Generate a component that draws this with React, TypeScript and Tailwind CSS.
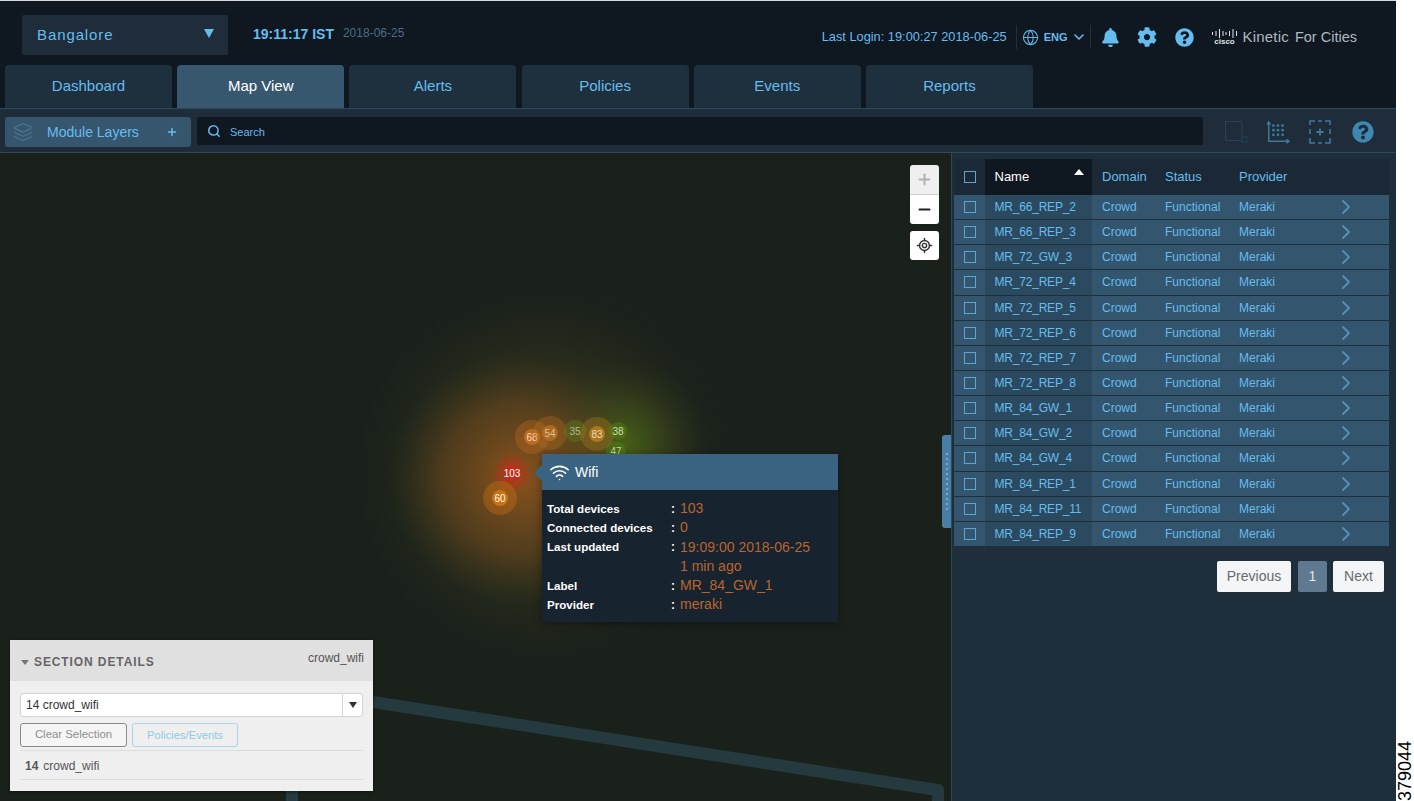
import React from 'react'
import { ChevronDown, ChevronRight, Globe, Layers, LocateFixed, Minus, Plus, Search, Wifi } from 'lucide-react'
import { FaBell, FaCog, FaQuestionCircle } from 'react-icons/fa'

const tabs = ['Dashboard', 'Map View', 'Alerts', 'Policies', 'Events', 'Reports']

const devices = [
  'MR_66_REP_2',
  'MR_66_REP_3',
  'MR_72_GW_3',
  'MR_72_REP_4',
  'MR_72_REP_5',
  'MR_72_REP_6',
  'MR_72_REP_7',
  'MR_72_REP_8',
  'MR_84_GW_1',
  'MR_84_GW_2',
  'MR_84_GW_4',
  'MR_84_REP_1',
  'MR_84_REP_11',
  'MR_84_REP_9',
]

const clusters = [
  { x: 532, y: 284, halo: 17, dot: 8, color: '#c8701f', label: '68', text: '#f2dcc4' },
  { x: 550, y: 280, halo: 17, dot: 8, color: '#b8701f', label: '54', text: '#d9c09a' },
  { x: 575, y: 278, halo: 11, dot: 0, color: '#5a7a1c', label: '35', text: '#b5ba90' },
  { x: 597, y: 281, halo: 17, dot: 8, color: '#b8801f', label: '83', text: '#efdcb8' },
  { x: 618, y: 278, halo: 9, dot: 0, color: '#4f8a12', label: '38', text: '#d3deb0' },
  { x: 616, y: 298, halo: 10, dot: 0, color: '#4f8a12', label: '47', text: '#c8d4a8' },
  { x: 512, y: 320, halo: 17, dot: 9, color: '#c9281c', label: '103', text: '#ffffff' },
  { x: 500, y: 345, halo: 17, dot: 8, color: '#d9780f', label: '60', text: '#ffffff' },
]

const popoverRows = [
  { label: 'Total devices', value: '103' },
  { label: 'Connected devices', value: '0' },
  { label: 'Last updated', value: '19:09:00 2018-06-25' },
  { label: '', value: '1 min ago' },
  { label: 'Label', value: 'MR_84_GW_1' },
  { label: 'Provider', value: 'meraki' },
]

const CiscoLogo = () => (
  <div className="flex w-[28px] flex-col items-center">
    <svg width="28" height="9" viewBox="0 0 28 9">
      {[1, 4.5, 8, 11.5, 14.5, 18, 21.5, 25].map((x, i) => {
        const h = [3, 5, 9, 5, 3, 5, 9, 5][i]
        return <rect key={x} x={x} y={(9 - h) / 2} width="1" height={h} fill="#dfe6ea" />
      })}
    </svg>
    <span className="text-[8px] leading-[8px] font-bold text-[#dfe6ea]">cisco</span>
  </div>
)

const Header = () => (
  <div className="flex h-[64px] items-start bg-[#0f1720] pl-[22px]">
    <div className="mt-[14px] flex h-[40px] w-[206px] items-center justify-between rounded-[2px] bg-[#1e2d39] pl-[15px] pr-[14px]">
      <span className="text-[15px] font-medium tracking-[0.9px] text-[#67bcee]">Bangalore</span>
      <svg width="10" height="9" viewBox="0 0 10 9" className="mb-[3px]">
        <path d="M0 0h10L5 9z" fill="#67bcee" />
      </svg>
    </div>
    <span className="ml-[25px] mt-[24px] text-[14px] leading-[18px] font-bold text-[#67bcee]">19:11:17 IST</span>
    <span className="ml-[9px] mt-[25px] text-[12px] leading-[14px] text-[#4b6d85]">2018-06-25</span>
    <div className="ml-auto mr-[39px] mt-[23px] flex h-[26px] items-center">
      <span className="text-[12.8px] font-medium text-[#67bcee]">Last Login: 19:00:27 2018-06-25</span>
      <div className="ml-[9px] h-[24px] w-px bg-[#22303b]" />
      <Globe className="ml-[5px] h-[17px] w-[17px] text-[#5fb0e0]" strokeWidth={1.6} />
      <span className="ml-[5px] text-[11px] font-bold text-[#67bcee]">ENG</span>
      <ChevronDown className="ml-[3px] h-[16px] w-[16px] text-[#67bcee]" strokeWidth={2.4} />
      <div className="ml-[3px] h-[24px] w-px bg-[#22303b]" />
      <FaBell className="ml-[11px] h-[19px] w-[17px] text-[#67bcee]" />
      <FaCog className="ml-[18px] h-[20px] w-[20px] text-[#67bcee]" />
      <FaQuestionCircle className="ml-[18px] h-[19px] w-[19px] text-[#67bcee]" />
      <div className="ml-[17px]">
        <CiscoLogo />
      </div>
      <span className="ml-[4px] mt-px text-[15px] tracking-[0.2px] text-[#aeb8bf]">Kinetic</span>
      <span className="ml-[6px] mt-px text-[14.5px] text-[#aeb8bf]">For Cities</span>
    </div>
  </div>
)

const Tabs = () => (
  <div className="flex h-[43px] items-stretch gap-[5.2px] bg-[#0f1720] pl-[5px]">
    {tabs.map((tab) =>
      tab === 'Map View' ? (
        <div
          key={tab}
          className="flex w-[167px] items-center justify-center rounded-t-[4px] bg-[#37576f] text-[15px] font-medium text-white"
        >
          {tab}
        </div>
      ) : (
        <div
          key={tab}
          className="flex w-[167px] items-center justify-center rounded-t-[4px] bg-[#1e303d] text-[15px] text-[#67bcee]"
        >
          {tab}
        </div>
      ),
    )}
  </div>
)

const Toolbar = () => (
  <div className="flex h-[45px] items-start border-y border-[#2c4a5f] bg-[#1e2d39] pl-[5px] pt-[7px]">
    <div className="mt-px flex h-[30px] w-[186px] items-center rounded-[3px] bg-[#36566e] pl-[8px]">
      <Layers className="h-[20px] w-[20px] text-[#4f7690]" strokeWidth={1.4} />
      <span className="ml-[14px] text-[14px] text-[#67bcee]">Module Layers</span>
      <Plus className="ml-[27px] h-[12px] w-[12px] text-[#67bcee]" strokeWidth={3} />
    </div>
    <div className="ml-[6px] mt-px flex h-[28px] w-[1006px] items-center rounded-[2px] bg-[#0f1720] pl-[10px]">
      <Search className="mb-[1px] h-[14px] w-[14px] text-[#67bcee]" strokeWidth={2.6} />
      <span className="ml-[9px] mt-[2px] text-[11px] text-[#67bcee]">Search</span>
    </div>
    <div className="ml-[20px] mt-[2px] flex h-[28px] items-center">
      <svg width="26" height="26" viewBox="0 0 26 26" fill="none" stroke="#27445a" strokeWidth="1">
        <path d="M19 19.5V2.5H2.5v19h16" />
        <path d="M19 18h5v6l-2.5-1.5L19 24z" />
      </svg>
      <svg width="24" height="26" viewBox="0 0 26 26" className="ml-[17px]" fill="none" stroke="#3d7a9f" strokeWidth="1.6">
        <path d="M3 3v20h21" />
        <path d="M1 5l2-3 2 3M22 21l3 2-3 2" />
        <g fill="#3d7a9f" stroke="none">
          {[8, 13, 18].map((cx) =>
            [6, 11, 16].map((cy) => <circle key={`${cx}-${cy}`} cx={cx} cy={cy} r="1.5" />),
          )}
        </g>
      </svg>
      <svg width="24" height="26" viewBox="0 0 24 26" className="ml-[18px]" fill="none" stroke="#3d7a9f" strokeWidth="1.6">
        <path d="M2 6V2h5M17 2h5v4M2 19v5h5M17 24h5v-5M10 2h4M10 24h4M2 10v5M22 10v5" />
        <path d="M12 9.5v7M8.5 13h7" strokeWidth="1.8" />
      </svg>
      <FaQuestionCircle className="ml-[20px] h-[22px] w-[22px] text-[#3f86b0]" />
    </div>
  </div>
)

const MapCanvas = () => (
  <svg width="951" height="648" viewBox="0 0 951 648" className="block">
    <defs>
      <radialGradient id="heatWide">
        <stop offset="0" stopColor="#6a4c1e" stopOpacity="0.85" />
        <stop offset="0.45" stopColor="#453f1c" stopOpacity="0.55" />
        <stop offset="0.75" stopColor="#2b2f1c" stopOpacity="0.32" />
        <stop offset="1" stopColor="#1a211b" stopOpacity="0" />
      </radialGradient>
      <radialGradient id="heatOrange">
        <stop offset="0" stopColor="#a05a1c" stopOpacity="0.7" />
        <stop offset="0.6" stopColor="#74491f" stopOpacity="0.45" />
        <stop offset="1" stopColor="#4a3a1c" stopOpacity="0" />
      </radialGradient>
      <radialGradient id="heatGreen">
        <stop offset="0" stopColor="#4f7a14" stopOpacity="0.65" />
        <stop offset="0.5" stopColor="#4a601a" stopOpacity="0.32" />
        <stop offset="1" stopColor="#2a3a1c" stopOpacity="0" />
      </radialGradient>
    </defs>
    <circle cx="545" cy="322" r="200" fill="url(#heatWide)" />
    <circle cx="625" cy="290" r="85" fill="url(#heatGreen)" />
    <circle cx="515" cy="325" r="125" fill="url(#heatOrange)" />
    <path d="M373 549L938 637V648M292 636V648" fill="none" stroke="#243a3e" strokeWidth="12" strokeLinejoin="round" />
    {clusters.map((c) => (
      <g key={c.label}>
        <circle cx={c.x} cy={c.y} r={c.halo} fill={c.color} fillOpacity={c.dot ? 0.32 : 0.45} />
        {c.dot > 0 && <circle cx={c.x} cy={c.y} r={c.dot} fill={c.color} fillOpacity="0.8" />}
        <text
          x={c.x}
          y={c.y + 3.5}
          textAnchor="middle"
          fontSize="10"
          fontFamily="'Liberation Sans', sans-serif"
          fill={c.text}
        >
          {c.label}
        </text>
      </g>
    ))}
  </svg>
)

const MapControls = () => (
  <div className="absolute left-[910px] top-[12px] flex w-[29px] flex-col">
    <div className="flex h-[30px] items-center justify-center rounded-t-[3px] border-b border-[#cfcfcf] bg-[#efefef]">
      <Plus className="h-[17px] w-[17px] text-[#b0b0b0]" strokeWidth={2.8} />
    </div>
    <div className="flex h-[29px] items-center justify-center rounded-b-[3px] bg-white">
      <Minus className="h-[17px] w-[17px] text-[#222222]" strokeWidth={3} />
    </div>
    <div className="mt-[7px] flex h-[29px] items-center justify-center rounded-[3px] bg-white">
      <LocateFixed className="h-[17px] w-[17px] text-[#333333]" strokeWidth={2} />
    </div>
  </div>
)

const WifiPopover = () => (
  <div className="absolute left-[542px] top-[301px] w-[296px] shadow-[0_2px_8px_rgba(0,0,0,0.4)]">
    <div className="absolute left-[-8px] top-[11px] h-0 w-0 border-y-[8px] border-r-[8px] border-y-transparent border-r-[#3a6382]" />
    <div className="flex h-[36px] items-center bg-[#3a6382] pl-[7px]">
      <Wifi className="h-[21px] w-[21px] text-white" strokeWidth={1.8} />
      <span className="ml-[5px] mt-px text-[14px] text-white">Wifi</span>
    </div>
    <div className="bg-[#17232e] px-[5px] pb-[8px] pt-[8px]">
      {popoverRows.map((row) => (
        <div key={row.value} className="grid h-[19.3px] grid-cols-[124px_9px_1fr] items-center">
          <span className="text-[11.6px] font-bold text-white">{row.label}</span>
          <span className="text-[12px] font-bold text-white">{row.label ? ':' : ''}</span>
          <span className="text-[14px] text-[#b9652f]">{row.value}</span>
        </div>
      ))}
    </div>
  </div>
)

const SectionDetails = () => (
  <div className="absolute left-[10px] top-[487px] w-[363px] bg-[#efefef] shadow-[0_1px_3px_rgba(0,0,0,0.5)]">
    <div className="flex h-[41px] items-start justify-between bg-[#e0e0e0] pl-[11px] pr-[9px]">
      <div className="mt-[13px] flex items-center">
        <svg width="8" height="5" viewBox="0 0 8 5">
          <path d="M0 0h8L4 5z" fill="#777777" />
        </svg>
        <span className="ml-[5px] text-[12px] font-bold tracking-[0.9px] text-[#666666]">SECTION DETAILS</span>
      </div>
      <span className="mt-[9px] text-[12px] text-[#555555]">crowd_wifi</span>
    </div>
    <div className="px-[10px] pt-[12px]">
      <div className="flex h-[24px] items-center rounded-[3px] border border-[#d4d4d4] bg-white pl-[5px]">
        <span className="flex-1 text-[12px] text-[#333333]">14 crowd_wifi</span>
        <div className="flex h-full w-[20px] items-center justify-center border-l border-[#d4d4d4]">
          <svg width="8" height="6" viewBox="0 0 8 6">
            <path d="M0 0h8L4 6z" fill="#333333" />
          </svg>
        </div>
      </div>
      <div className="mt-[6px] flex gap-[5px] border-b border-[#dcdcdc] pb-[3px]">
        <div className="flex h-[24px] w-[107px] items-center justify-center rounded-[3px] border border-[#8a8a8a] bg-[#f5f5f5] text-[11.4px] text-[#8f8f8f]">
          Clear Selection
        </div>
        <div className="flex h-[24px] w-[106px] items-center justify-center rounded-[3px] border border-[#a9d6ec] text-[11.2px] text-[#8fc9e6]">
          Policies/Events
        </div>
      </div>
      <div className="flex h-[29px] items-center border-b border-[#dcdcdc] pl-[5px] pt-[2px] text-[12px] text-[#555555]">
        <span className="font-bold">14</span>
        <span className="ml-[5px]">crowd_wifi</span>
      </div>
      <div className="h-[11px]" />
    </div>
  </div>
)

const Checkbox = () => <div className="h-[12px] w-[12px] border-[1.5px] border-[#5fa5d2]" />

const DeviceTable = () => (
  <div className="flex flex-col">
    <div className="grid h-[36px] grid-cols-[31px_107px_63px_74px_1fr] items-center bg-[#1a2935] text-[13px] text-[#67bcee]">
      <div className="flex justify-center">
        <Checkbox />
      </div>
      <div className="relative flex h-full items-center bg-[#10181f] pl-[9.5px] font-medium text-white">
        Name
        <svg width="10" height="6" viewBox="0 0 10 6" className="absolute right-[8px] top-[10px]">
          <path d="M0 6h10L5 0z" fill="#ffffff" />
        </svg>
      </div>
      <div className="pl-[10px]">Domain</div>
      <div className="pl-[10px]">Status</div>
      <div className="pl-[10px]">Provider</div>
    </div>
    {devices.map((name) => (
      <div
        key={name}
        className="mb-[1px] grid h-[24.15px] grid-cols-[31px_107px_63px_74px_106px_1fr] items-center bg-[#33556d] text-[12px] text-[#67bcee]"
      >
        <div className="flex justify-center">
          <Checkbox />
        </div>
        <div className="flex h-full items-center bg-[#2b4a60] pl-[9.5px] tracking-[-0.2px]">{name}</div>
        <div className="pl-[10px]">Crowd</div>
        <div className="pl-[10px]">Functional</div>
        <div className="pl-[10px]">Meraki</div>
        <ChevronRight className="ml-[-1px] h-[24px] w-[24px] text-[#5590b8]" strokeWidth={1.8} />
      </div>
    ))}
  </div>
)

const Pagination = () => (
  <div className="mt-[14px] flex justify-end pr-[5px] text-[14px]">
    <div className="flex h-[31px] w-[74px] items-center justify-center rounded-[2px] bg-[#f3f5f6] text-[#666b6f]">Previous</div>
    <div className="ml-[7px] flex h-[31px] w-[29px] items-center justify-center rounded-[2px] bg-[#5f7a90] text-[#dfe6ea]">1</div>
    <div className="ml-[6px] flex h-[31px] w-[51px] items-center justify-center rounded-[2px] bg-[#f3f5f6] text-[#666b6f]">Next</div>
  </div>
)

export default function App() {
  return (
    <div className="flex h-[801px] w-[1414px] overflow-hidden bg-white font-['Liberation_Sans',sans-serif]">
      <div className="flex w-[1396px] flex-col border-t border-[#d5dadd]">
        <Header />
        <Tabs />
        <Toolbar />
        <div className="flex flex-1">
          <div className="relative w-[951px] overflow-hidden bg-[#1a211b]">
            <MapCanvas />
            <MapControls />
            <WifiPopover />
            <SectionDetails />
            <div className="absolute left-[942px] top-[282px] flex h-[93px] w-[9px] flex-col items-center justify-center gap-[3px] rounded-l-[3px] bg-[#4a7fa5]">
              {Array.from({ length: 12 }).map((_, i) => (
                <div key={i} className="h-[2px] w-[2px] rounded-full bg-[#8fb7d2]" />
              ))}
            </div>
          </div>
          <div className="flex-1 border-l border-[#2c4a5f] bg-[#1e2e3b] pl-[2px] pr-[7px] pt-[6px]">
            <DeviceTable />
            <Pagination />
          </div>
        </div>
      </div>
      <div className="flex w-[18px] items-end">
        <span className="rotate-180 text-[18px] leading-[18px] text-black [writing-mode:vertical-rl]">379044</span>
      </div>
    </div>
  )
}
